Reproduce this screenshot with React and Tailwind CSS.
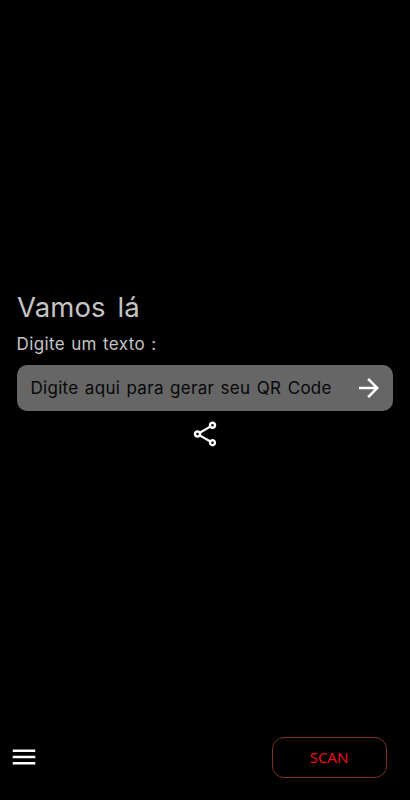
import React, { useState } from 'react';
import { MdArrowForward, MdMenu, MdOutlineShare } from 'react-icons/md';

const App = () => {
  const [text, setText] = useState('');

  return (
    <div className="flex h-[800px] w-[410px] flex-col bg-black font-['Inter',sans-serif]">
      <main className="flex flex-col px-[17px] pt-[288px]">
        <h1 className="h-[38px] text-[27.5px] leading-[38px] tracking-[0.1px] text-[#c4c4c4] [word-spacing:4px]">
          Vamos lá
        </h1>
        <label
          htmlFor="qr-text"
          className="mt-[6px] -ml-[0.5px] h-6 text-[17px] leading-6 tracking-[0.38px] text-[#c4c4c4] [word-spacing:1px]"
        >
          Digite um texto :
        </label>

        <div className="mt-[9px] flex h-[46px] w-[376px] items-center rounded-[10px] bg-[#666666] pr-[9.5px] pl-[13.5px]">
          <input
            id="qr-text"
            value={text}
            onChange={(e) => setText(e.target.value)}
            placeholder="Digite aqui para gerar seu QR Code"
            className="min-w-0 flex-1 bg-transparent pt-[2px] text-[17px] tracking-[0.29px] text-[#080808] outline-none [word-spacing:1.3px] placeholder:text-[#080808]"
          />
          <button aria-label="Gerar QR Code" className="text-white">
            <MdArrowForward size={30} />
          </button>
        </div>

        <button aria-label="Compartilhar" className="mt-[8px] self-center text-white">
          <MdOutlineShare size={30} />
        </button>
      </main>

      <footer className="mt-auto mb-[22px] flex items-center justify-between pr-[23px] pl-[9px]">
        <button aria-label="Menu" className="pb-px text-white">
          <MdMenu size={30} />
        </button>
        <button className="h-[41px] w-[115px] rounded-[12px] border border-[#7a3025] pr-px text-[15px] text-[#ea0c1c] font-['Noto_Sans',sans-serif]">
          SCAN
        </button>
      </footer>
    </div>
  );
};

export default App;
